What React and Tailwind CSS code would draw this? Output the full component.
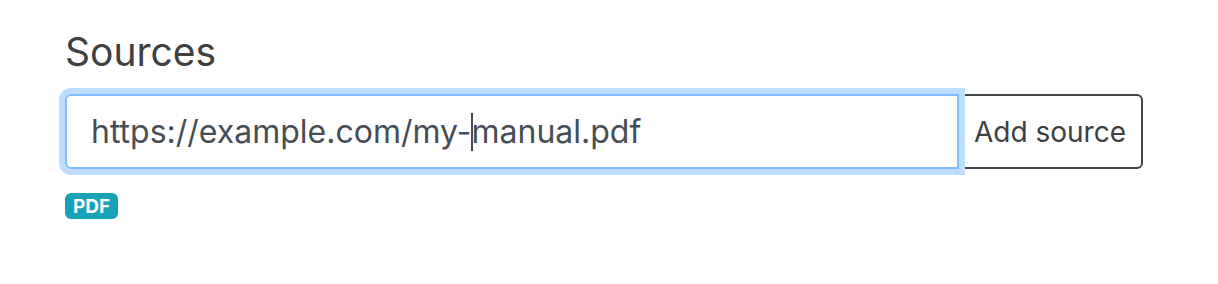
export default function App() {
  return (
    <div className="min-h-[284px] bg-white pl-[65px] pt-[27px]" style={{ fontFamily: 'Inter, "Noto Sans", sans-serif' }}>
      <h3 className="text-[39px] leading-[50px] font-normal text-[#404040]">Sources</h3>
      <div className="mt-[17px] flex w-[1078px] h-[75px]">
        <div className="flex-1 flex items-center rounded-l-[6px] border-2 border-[#80bdff] pl-[24px] shadow-[0_0_0_6px_#bfdcfd] text-[32px] text-[#474d55] relative z-10">
          <span>https://example.com/my-</span>
          <span className="inline-block w-[2px] h-[38px] bg-[#474d55] mx-[-1px]" />
          <span>manual.pdf</span>
        </div>
        <button className="w-[184px] h-full rounded-r-[6px] border-2 border-l-0 border-[#444] text-[28px] text-[#404040] bg-white">
          Add source
        </button>
      </div>
      <div className="mt-[24px]">
        <span className="inline-flex items-center h-[26px] px-[8px] rounded-[6px] bg-[#17a2b8] text-white text-[19px] font-bold leading-none">
          PDF
        </span>
      </div>
    </div>
  )
}
